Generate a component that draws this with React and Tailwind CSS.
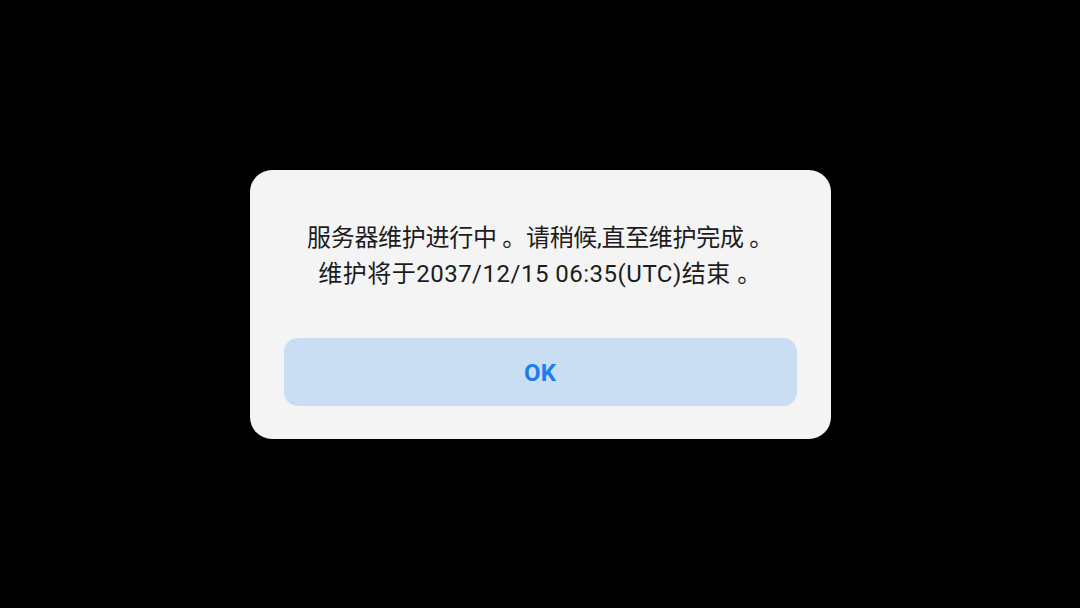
export default function App() {
  return (
    <div className="w-[1080px] h-[608px] bg-black flex items-center justify-center [font-family:Roboto,'Noto_Sans_CJK_SC',sans-serif]">
      <div className="w-[581px] h-[269px] bg-[#f4f4f4] rounded-[22px] flex flex-col items-center px-[34px] pt-[50px]">
        <div className="text-center text-[24px] leading-[36px] text-[#1c1c1c]">
          <p className="tracking-[-0.3px]">服务器维护进行中 。请稍候,直至维护完成 。</p>
          <p className="tracking-[0.5px]">维护将于2037/12/15 06:35(UTC)结束 。</p>
        </div>
        <button className="mt-[46px] w-full h-[68px] pt-[2px] rounded-[14px] bg-[#cadef3] text-[#1a7ef0] text-[24px] font-bold">
          OK
        </button>
      </div>
    </div>
  );
}
